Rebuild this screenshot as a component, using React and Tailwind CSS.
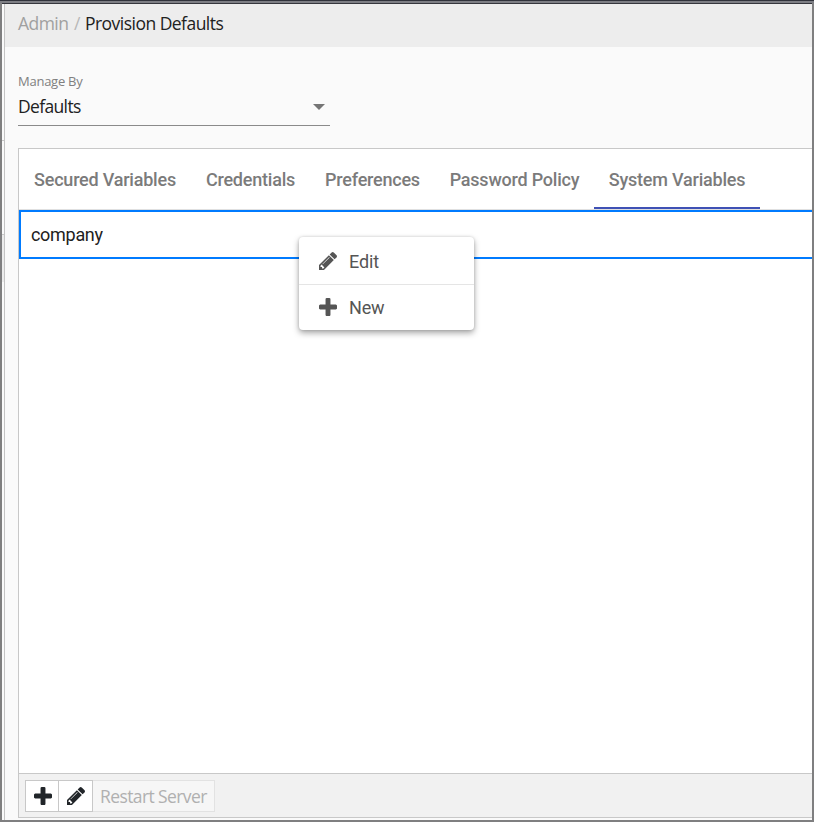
const SEGOE = "font-['Open_Sans','Noto_Sans',sans-serif]";

function PencilIcon({ className }) {
  return (
    <svg viewBox="128 149 1515 1515" fill="currentColor" className={className} aria-hidden="true">
      <path d="M491 1536l91-91-235-235-91 91v107h128v128h107zm523-928q0-22-22-22-10 0-17 7l-542 542q-7 7-7 17 0 22 22 22 10 0 17-7l542-542q7-7 7-17zm-54-192l416 416-832 832h-416v-416zm683 96q0 53-37 90l-166 166-416-416 166-165q36-38 90-38 53 0 91 38l235 234q37 39 37 91z" />
    </svg>
  );
}

function PlusIcon({ className }) {
  return (
    <svg viewBox="192 128 1408 1408" fill="currentColor" className={className} aria-hidden="true">
      <path d="M1600 736v192q0 40-28 68t-68 28h-416v416q0 40-28 68t-68 28h-192q-40 0-68-28t-28-68v-416h-416q-40 0-68-28t-28-68v-192q0-40 28-68t68-28h416v-416q0-40 28-68t68-28h192q40 0 68 28t28 68v416h416q40 0 68 28t28 68z" />
    </svg>
  );
}

const tabs = [
  { label: "Secured Variables", width: "w-[172px]" },
  { label: "Credentials", width: "w-[119px]" },
  { label: "Preferences", width: "w-[125px]" },
  { label: "Password Policy", width: "w-[159px]" },
  { label: "System Variables", width: "w-[166px]", active: true },
];

function ContextMenu() {
  return (
    <div className="absolute left-[280px] top-[88px] h-[93px] w-[175px] rounded bg-white text-lg tracking-[-0.15px] text-[#555] shadow-[0_3px_6px_rgba(0,0,0,0.35),0_0_3px_rgba(0,0,0,0.15)]">
      <div className="flex h-12 items-center border-b border-[#e5e5e5] pl-5">
        <PencilIcon className="h-[18px] w-[18px]" />
        <span className="ml-3 mt-[2px]">Edit</span>
      </div>
      <div className="flex h-[43px] items-center pl-5">
        <PlusIcon className="h-[18px] w-[18px]" />
        <span className="ml-3 mt-[2px]">New</span>
      </div>
    </div>
  );
}

export default function App() {
  return (
    <div className="h-[822px] w-[814px] overflow-hidden bg-[#7f7f80] font-[Roboto,sans-serif]">
      <div className="h-px bg-[#30323b]" />
      <div className="h-[2px] bg-[#7d7e84]" />
      <div className="mr-[2px] ml-[2px] h-px bg-[#35363d]" />
      <div className="mx-[2px] flex h-[816px]">
        <div className="flex w-[3px] shrink-0 flex-col border-r border-[#c3c3c3] bg-[#fafafa]">
          <div className="h-[137px] border-b border-[#c8c8c8]" />
          <div className="h-[94px] border-b border-[#c8c8c8]" />
          <div className="h-[47px] bg-[#ececec]" />
        </div>
        <main className="flex min-w-0 flex-1 flex-col bg-[#fafafa]">
          <header className={`flex h-[43px] items-center bg-[#ededed] pb-[5px] pl-[13px] text-[17.5px] whitespace-pre ${SEGOE}`}>
            <span className="w-[56px] tracking-[-0.55px] text-[#a0a0a0]">Admin</span>
            <span className="w-[11px] text-[#b8b8b8]">/</span>
            <span className="tracking-[-0.53px] text-[#212121]">Provision Defaults</span>
          </header>

          <section className={`ml-[13px] mt-[25px] w-[312px] ${SEGOE}`}>
            <div className="h-[18px] text-[13px] leading-[18px] tracking-[-0.25px] text-[#808080]">Manage By</div>
            <div className="flex h-9 justify-between border-b border-[#8a8a8a] pt-1">
              <span className="text-[17.5px] leading-6 tracking-[-0.65px] text-[#212121]">Defaults</span>
              <span className="mr-[5px] mt-[10px] h-0 w-0 border-x-[6px] border-t-[6px] border-x-transparent border-t-[#757575]" />
            </div>
          </section>

          <section className="relative ml-[13px] mt-[22px] flex h-[670px] flex-col border-y border-l border-[#c8c8c8] bg-white">
            <nav className="flex h-[61px] shrink-0 border-b border-[#e0e0e0]">
              {tabs.map((tab) => (
                <div
                  key={tab.label}
                  className={`${tab.width} flex shrink-0 items-center justify-center border-b-2 pt-[4px] text-lg font-medium tracking-[-0.22px] whitespace-nowrap text-[#7b7b7b] ${tab.active ? "border-[#3f51b5]" : "border-transparent"}`}
                >
                  {tab.label}
                </div>
              ))}
            </nav>
            <div className="flex h-[49px] shrink-0 items-center border-2 border-r-0 border-[#007bff] pl-[10px] text-lg tracking-[-0.3px] text-[#212121]">
              company
            </div>
            <div className="flex-1" />
            <footer className={`flex h-11 items-start border-t border-[#c8c8c8] bg-[#f1f1f1] pl-[6px] pt-[6px] ${SEGOE}`}>
              <button className="flex h-8 w-[34px] items-center justify-center border border-[#c8c8c8] bg-white pl-px text-[#212529]">
                <PlusIcon className="h-[18px] w-[18px]" />
              </button>
              <button className="-ml-px flex h-8 w-[35px] items-center justify-center border border-[#c8c8c8] bg-white text-[#212529]">
                <PencilIcon className="h-[18px] w-[18px]" />
              </button>
              <button className="flex h-8 w-[122px] items-center border border-l-0 border-[#e2e2e2] bg-[#f6f6f6] pl-[7px] text-[17.5px] tracking-[-0.6px] whitespace-nowrap text-[#b0b0b0]">
                Restart Server
              </button>
            </footer>
            <ContextMenu />
          </section>
        </main>
      </div>
    </div>
  );
}
